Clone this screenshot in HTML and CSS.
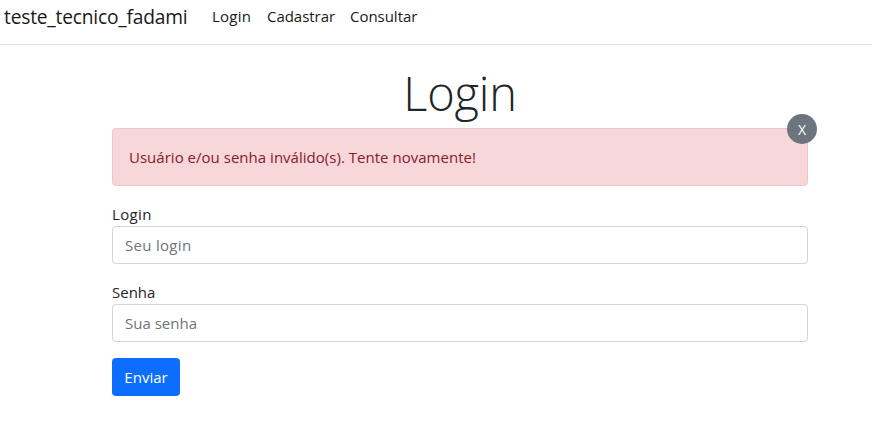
FILE: index.html
```html
<!DOCTYPE html>
<html lang="pt-BR">
<head>
<meta charset="utf-8">
<title>teste_tecnico_fadami</title>
<link rel="stylesheet" href="styles.css">
</head>
<body>
<nav class="navbar">
  <a class="brand">teste_tecnico_fadami</a>
  <a class="nav-link link-login">Login</a>
  <a class="nav-link link-cadastrar">Cadastrar</a>
  <a class="nav-link">Consultar</a>
</nav>
<main class="container">
  <h1 class="title">Login</h1>
  <div class="alert" role="alert">
    <span>Usuário e/ou senha inválido(s). Tente novamente!</span>
    <button class="close" type="button">X</button>
  </div>
  <form class="form">
    <div class="field">
      <label class="label label-login" for="login">Login</label>
      <input class="input input-login" id="login" type="text" placeholder="Seu login">
    </div>
    <div class="field">
      <label class="label" for="senha">Senha</label>
      <input class="input" id="senha" type="password" placeholder="Sua senha">
    </div>
    <button class="submit" type="button">Enviar</button>
  </form>
</main>
</body>
</html>
```
FILE: styles.css
```css
* { box-sizing: border-box; }
body {
  margin: 0;
  background: #fff;
  color: #212529;
  font: 370 15px/24px "Segoe UI", "Open Sans", "Noto Sans", sans-serif;
  overflow: hidden;
}
.navbar {
  display: flex;
  align-items: center;
  height: 45px;
  padding: 0 4px 12px;
  border-bottom: 1px solid #dee2e6;
  color: #191919;
  white-space: nowrap;
}
.brand { width: 208px; padding-top: 2px; font-size: 19.2px; letter-spacing: -0.2px; }
.nav-link { padding-bottom: 1px; letter-spacing: -0.03px; }
.link-login { width: 55px; letter-spacing: 0.25px; }
.link-cadastrar { width: 83px; }
.container { width: 696px; margin: 0 0 0 112px; }
.title {
  margin: 20px 0 6px;
  font-size: 47px;
  font-weight: 300;
  line-height: 57px;
  letter-spacing: -0.2px;
  text-align: center;
}
.alert {
  position: relative;
  height: 58px;
  padding: 16px;
  border: 1px solid #f5c2c7;
  border-radius: 4px;
  background: #f8d7da;
  color: #842029;
  letter-spacing: 0.02px;
  white-space: nowrap;
}
.close {
  position: absolute;
  top: -15px;
  right: -10px;
  width: 30px;
  height: 30px;
  padding: 1px 0 0;
  border: 0;
  border-radius: 50%;
  background: #6c757d;
  color: #fff;
  font: 14px/29px "Segoe UI", "Open Sans", sans-serif;
}
.form { margin-top: 16px; }
.field { height: 62px; margin-bottom: 16px; }
.label { display: block; color: #212529; }
.label-login { letter-spacing: 0.35px; }
.input {
  display: block;
  width: 100%;
  height: 38px;
  padding: 6px 12px;
  border: 1px solid #ced4da;
  border-radius: 4px;
  background: #fff;
  font: inherit;
}
.input-login { letter-spacing: 0.3px; }
.input::placeholder { color: #6c757d; opacity: 1; }
.submit {
  width: 68px;
  height: 38px;
  padding: 0;
  border: 0;
  border-radius: 4px;
  background: #0d6efd;
  color: #fff;
  font: 15px/38px "Segoe UI", "Open Sans", sans-serif;
}
```
